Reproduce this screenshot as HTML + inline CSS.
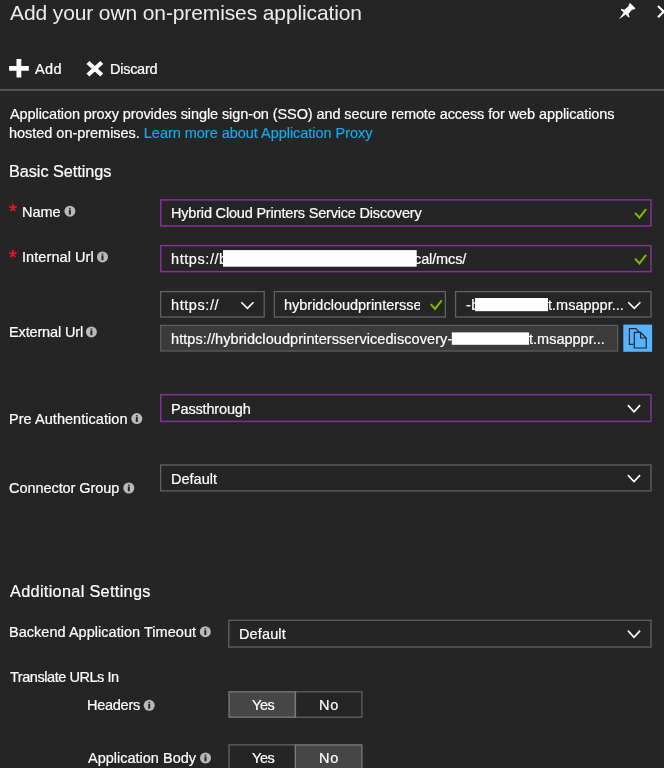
<!DOCTYPE html>
<html>
<head>
<meta charset="utf-8">
<title>Add your own on-premises application</title>
<style>
html,body{margin:0;padding:0;}
body{width:664px;height:768px;overflow:hidden;background:#252525;color:#fff;font-family:"Liberation Sans",sans-serif;position:relative;}
.t{position:absolute;white-space:nowrap;line-height:1;color:#fff;will-change:transform;-webkit-text-stroke:0.2px currentColor;}
a{color:#10abea;text-decoration:none;}
#geo{position:absolute;left:0;top:0;}
.bx{fill:none;stroke:#626262;stroke-width:1.3;}
.pu{fill:none;stroke:#83309b;stroke-width:1.5;}
.ch{fill:none;stroke:#fff;stroke-width:1.6;}
.ck{fill:none;stroke:#7fba00;stroke-width:2;}
.ic{fill:#b9b9b9;}
.ii{fill:#252525;}
</style>
</head>
<body>
<svg id="geo" width="664" height="768" viewBox="0 0 664 768">
  <!-- separator -->
  <rect x="0" y="89" width="664" height="1.8" fill="#595959"/>

  <!-- pin -->
  <g transform="translate(619 19.2) rotate(-45)" fill="#fff">
    <path d="M0 0 L8 -1.5 L7.9 -5 L8.9 -6 L10.6 -2.9 L15.8 -2.5 L18.2 -3.8 L19.3 -3.6 L19.3 3.8 L18.2 4 L15.8 2.5 L10.6 2.9 L8.9 6.2 L7.9 5.2 L8 1.5 Z"/>
  </g>
  <!-- close X -->
  <path d="M658 5.9 L669.4 17.3 M669.4 5.9 L658 17.3" stroke="#fff" stroke-width="2.1" fill="none"/>

  <!-- plus -->
  <path d="M16.5 59.1 H21.3 V65.9 H28.8 V70.7 H21.3 V77.4 H16.5 V70.7 H9.1 V65.9 H16.5 Z" fill="#fff"/>
  <!-- discard X -->
  <path d="M87.9 62.5 L101.8 75 M101.8 62.5 L87.9 75" stroke="#fff" stroke-width="4.3" fill="none"/>

  <!-- Name box -->
  <rect class="pu" x="160.7" y="199.9" width="490.3" height="26"/>
  <path class="ck" d="M635.1 212.9 L639.4 217.7 L646.1 209.2"/>
  <!-- Internal Url box -->
  <rect class="pu" x="160.7" y="245.6" width="490.3" height="26"/>
  <path class="ck" d="M635.1 258.6 L639.4 263.4 L646.1 254.9"/>

  <!-- External Url row 1 -->
  <rect class="bx" x="160.6" y="291.6" width="103.6" height="25.4"/>
  <path class="ch" d="M241.3 302.2 L247.4 308.4 L253.5 302.2"/>
  <rect class="bx" x="274.4" y="291.6" width="171" height="25.4"/>
  <path class="ck" d="M430.7 304.1 L435 308.9 L441.7 300.4"/>
  <rect class="bx" x="455.6" y="291.6" width="195.4" height="25.4"/>
  <path class="ch" d="M628.2 302.2 L634.3 308.4 L640.4 302.2"/>

  <!-- External Url row 2 -->
  <rect x="160.6" y="325.4" width="457" height="25.6" fill="#3b3b3b" stroke="#5c5c5c" stroke-width="1.3"/>
  <rect x="623.3" y="324.6" width="28.8" height="27.2" fill="#55b3fb"/>
  <g fill="none" stroke="#1b2733" stroke-width="1.2">
    <path d="M633.6 344.4 H629.4 V328.7 H635.8 L640.2 333.2"/>
    <path d="M634.3 332.4 H640.6 L646.2 338 V348 H634.3 Z"/>
    <path d="M640.6 332.4 V338 H646.2"/>
  </g>

  <!-- Pre Authentication -->
  <rect class="pu" x="160.7" y="394.7" width="490.3" height="26.7"/>
  <path class="ch" d="M627.9 405.1 L634 411.9 L640.1 405.1"/>
  <!-- Connector Group -->
  <rect class="bx" x="160.6" y="465" width="490.4" height="25.9"/>
  <path class="ch" d="M627.9 475.1 L634 481.6 L640.1 475.1"/>
  <!-- Backend timeout -->
  <rect class="bx" x="228.8" y="620.3" width="422.2" height="26.7"/>
  <path class="ch" d="M627.9 630.6 L634 637.2 L640.1 630.6"/>

  <!-- toggle buttons -->
  <rect x="229" y="691.8" width="66.4" height="25.4" fill="#464646" stroke="#7a7a7a" stroke-width="1.3"/>
  <rect class="bx" x="295.4" y="691.8" width="66.5" height="25.4"/>
  <path d="M295.4 691.2 V717.8" stroke="#7a7a7a" stroke-width="1.3"/>
  <rect class="bx" x="229" y="744.9" width="66.4" height="25.4"/>
  <rect x="295.4" y="744.9" width="66.5" height="25.4" fill="#464646" stroke="#7a7a7a" stroke-width="1.3"/>

  <!-- info icons -->
  <g id="info">
    <g transform="translate(69.9 211.2)"><circle class="ic" r="5.5"/><rect class="ii" x="-1" y="-1.5" width="2" height="4.8"/><rect class="ii" x="-0.85" y="-3.4" width="1.7" height="1.2"/></g>
    <g transform="translate(102.5 256.9)"><circle class="ic" r="5.5"/><rect class="ii" x="-1" y="-1.5" width="2" height="4.8"/><rect class="ii" x="-0.85" y="-3.4" width="1.7" height="1.2"/></g>
    <g transform="translate(91.4 331.9)"><circle class="ic" r="5.5"/><rect class="ii" x="-1" y="-1.5" width="2" height="4.8"/><rect class="ii" x="-0.85" y="-3.4" width="1.7" height="1.2"/></g>
    <g transform="translate(136.8 418.6)"><circle class="ic" r="5.5"/><rect class="ii" x="-1" y="-1.5" width="2" height="4.8"/><rect class="ii" x="-0.85" y="-3.4" width="1.7" height="1.2"/></g>
    <g transform="translate(128.8 488)"><circle class="ic" r="5.5"/><rect class="ii" x="-1" y="-1.5" width="2" height="4.8"/><rect class="ii" x="-0.85" y="-3.4" width="1.7" height="1.2"/></g>
    <g transform="translate(205.3 631.7)"><circle class="ic" r="5.5"/><rect class="ii" x="-1" y="-1.5" width="2" height="4.8"/><rect class="ii" x="-0.85" y="-3.4" width="1.7" height="1.2"/></g>
    <g transform="translate(149.2 705.3)"><circle class="ic" r="5.5"/><rect class="ii" x="-1" y="-1.5" width="2" height="4.8"/><rect class="ii" x="-0.85" y="-3.4" width="1.7" height="1.2"/></g>
    <g transform="translate(205.5 758)"><circle class="ic" r="5.5"/><rect class="ii" x="-1" y="-1.5" width="2" height="4.8"/><rect class="ii" x="-0.85" y="-3.4" width="1.7" height="1.2"/></g>
  </g>
</svg>

<div class="t" id="title" style="left:10px;top:2px;font-size:21px;letter-spacing:-0.114px;color:#ececec;-webkit-text-stroke:0;">Add your own on-premises application</div>
<div class="t" id="add" style="left:35px;top:62px;font-size:14.5px;letter-spacing:0.400px;">Add</div>
<div class="t" id="discard" style="left:110px;top:62px;font-size:14.5px;letter-spacing:-0.267px;">Discard</div>
<div class="t" id="p1" style="left:10px;top:107px;font-size:14.5px;letter-spacing:-0.096px;">Application proxy provides single sign-on (SSO) and secure remote access for web applications</div>
<div class="t" id="p2" style="left:9px;top:126px;font-size:14.5px;letter-spacing:-0.030px;">hosted on-premises. <a>Learn more about Application Proxy</a></div>
<div class="t" id="h1" style="left:9px;top:163px;font-size:16.3px;letter-spacing:-0.062px;">Basic Settings</div>
<div class="t" id="s1" style="left:9px;top:201px;font-size:20px;color:#ee1329;-webkit-text-stroke:0.5px #ee1329;">*</div>
<div class="t" id="l1" style="left:22px;top:205px;font-size:14.5px;">Name</div>
<div class="t" id="v1" style="left:171px;top:206px;font-size:14.5px;letter-spacing:-0.189px;">Hybrid Cloud Printers Service Discovery</div>
<div class="t" id="s2" style="left:9px;top:247px;font-size:20px;color:#ee1329;-webkit-text-stroke:0.5px #ee1329;">*</div>
<div class="t" id="l2" style="left:22px;top:250px;font-size:14.5px;letter-spacing:0.073px;">Internal Url</div>
<div class="t" id="v2a" style="left:171px;top:252px;font-size:14.5px;letter-spacing:0.571px;">https://b</div>
<div class="t" id="v2b" style="left:414px;top:252px;font-size:14.5px;letter-spacing:-0.114px;">cal/mcs/</div>
<div class="t" id="l3" style="left:9px;top:325px;font-size:14.5px;letter-spacing:-0.145px;">External Url</div>
<div class="t" id="v3a" style="left:171px;top:298px;font-size:14.5px;letter-spacing:0.571px;">https://</div>
<div class="t" id="v3b" style="left:284px;top:298px;font-size:14.5px;letter-spacing:-0.011px;width:135.6px;overflow:hidden;">hybridcloudprintersse</div>
<div class="t" id="v3c" style="left:466px;top:298px;font-size:14.5px;letter-spacing:0.300px;">-b</div>
<div class="t" id="v3d" style="left:548px;top:298px;font-size:14.5px;">t.msapppr...</div>
<div class="t" id="v4a" style="left:171px;top:332px;font-size:14.5px;letter-spacing:0.074px;">https://hybridcloudprintersservicediscovery-</div>
<div class="t" id="v4b" style="left:529px;top:332px;font-size:14.5px;">t.msapppr...</div>
<div class="t" id="l5" style="left:9px;top:412px;font-size:14.5px;letter-spacing:0.047px;">Pre Authentication</div>
<div class="t" id="v5" style="left:171px;top:402px;font-size:14.5px;letter-spacing:-0.160px;">Passthrough</div>
<div class="t" id="l6" style="left:9px;top:481px;font-size:14.5px;letter-spacing:-0.057px;">Connector Group</div>
<div class="t" id="v6" style="left:171px;top:472px;font-size:14.5px;">Default</div>
<div class="t" id="h2" style="left:10px;top:583px;font-size:16.3px;letter-spacing:0.311px;">Additional Settings</div>
<div class="t" id="l7" style="left:9px;top:625px;font-size:14.5px;letter-spacing:0.031px;">Backend Application Timeout</div>
<div class="t" id="v7" style="left:239px;top:627px;font-size:14.5px;letter-spacing:0.133px;">Default</div>
<div class="t" id="l8" style="left:10px;top:670px;font-size:14.5px;letter-spacing:-0.450px;">Translate URLs In</div>
<div class="t" id="l9" style="left:87px;top:698px;font-size:14.5px;letter-spacing:-0.267px;">Headers</div>
<div class="t" id="y1" style="left:252px;top:698px;font-size:14.5px;letter-spacing:-0.400px;">Yes</div>
<div class="t" id="n1" style="left:319px;top:698px;font-size:14.5px;letter-spacing:0.800px;">No</div>
<div class="t" id="l10" style="left:88px;top:751px;font-size:14.5px;">Application Body</div>
<div class="t" id="y2" style="left:252px;top:751px;font-size:14.5px;letter-spacing:-0.400px;">Yes</div>
<div class="t" id="n2" style="left:319px;top:751px;font-size:14.5px;letter-spacing:0.800px;">No</div>

<svg id="redact" width="664" height="768" viewBox="0 0 664 768" style="position:absolute;left:0;top:0">
  <rect x="223" y="250.1" width="193.7" height="16.6" fill="#fff"/>
  <rect x="475" y="298" width="73" height="13.2" fill="#fff"/>
  <rect x="451.8" y="332.4" width="77.3" height="12.4" fill="#fff"/>
</svg>

</body>
</html>
